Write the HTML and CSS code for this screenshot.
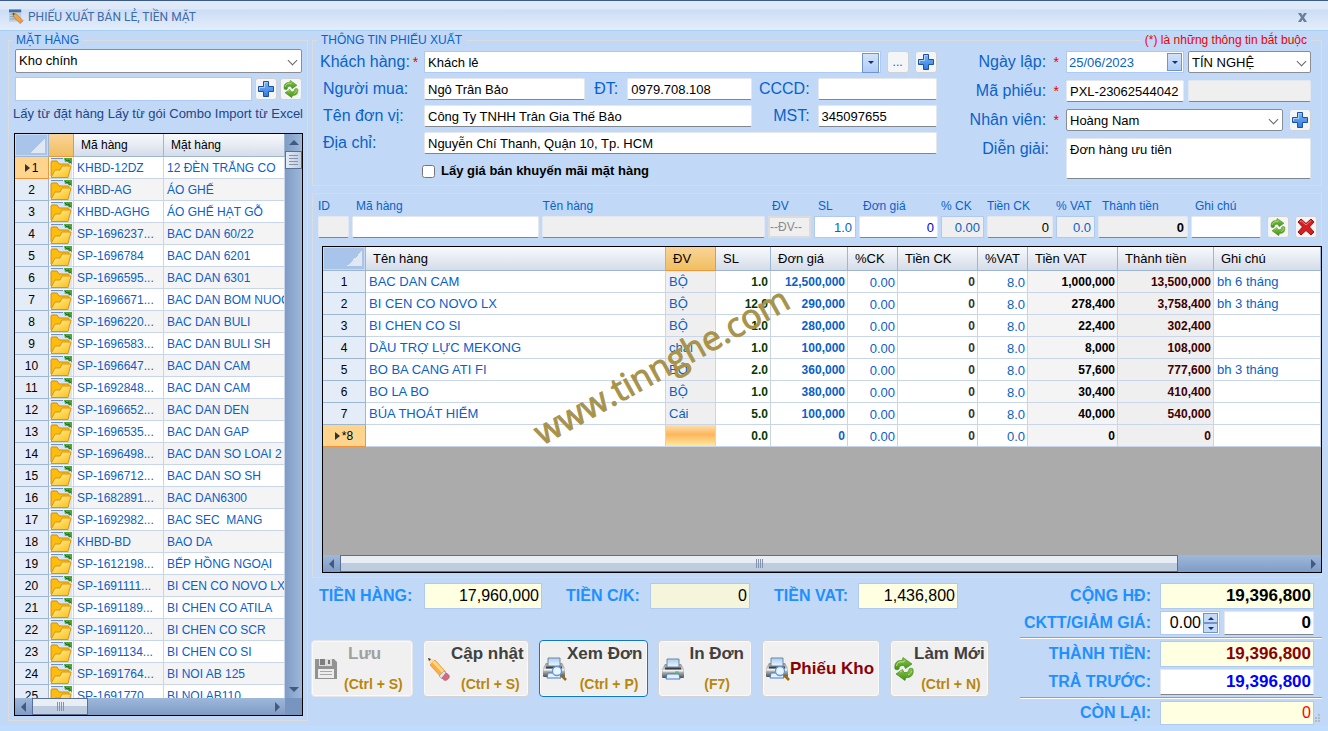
FILE: index.html
```html
<!DOCTYPE html>
<html lang="vi">
<head>
    <meta charset="UTF-8">
    <title>Phiếu xuất bán lẻ, tiền mặt</title>
    <link rel="stylesheet" href="styles.css">
</head>
<body>

<!-- icons shared by the buttons and the tables -->
<svg class="icon-defs" width="0" height="0" aria-hidden="true">
    <defs>
        <linearGradient id="gBlue" x1="0" y1="0" x2="0" y2="1">
            <stop offset="0" stop-color="#7db8f5"/>
            <stop offset="1" stop-color="#2f7ae0"/>
        </linearGradient>
        <linearGradient id="gGreen" x1="0" y1="0" x2="0" y2="1">
            <stop offset="0" stop-color="#8cc94a"/>
            <stop offset="1" stop-color="#3f9216"/>
        </linearGradient>
        <linearGradient id="gFolder" x1="0" y1="0" x2="1" y2="1">
            <stop offset="0" stop-color="#fff3a0"/>
            <stop offset="1" stop-color="#f9bd16"/>
        </linearGradient>
        <linearGradient id="gGrey" x1="0" y1="0" x2="0" y2="1">
            <stop offset="0" stop-color="#8f9297"/>
            <stop offset=".45" stop-color="#d2d4d7"/>
            <stop offset="1" stop-color="#4c4f54"/>
        </linearGradient>
        <linearGradient id="gPaper" x1="0" y1="0" x2="0" y2="1">
            <stop offset="0" stop-color="#a9cdee"/>
            <stop offset="1" stop-color="#eef6ff"/>
        </linearGradient>
    </defs>
    <symbol id="plus" viewBox="0 0 18 18">
        <path d="M6.500 1.500h5v5h5v5h-5v5h-5v-5h-5v-5h5z" fill="url(#gBlue)" stroke="#1d4fa8" stroke-linejoin="round"/>
        <path d="M7.500 7.500v-5h3M2.500 10V7.500h5" fill="none" stroke="#a9d2fb"/>
    </symbol>
    <symbol id="refresh" viewBox="0 0 20 24">
        <path d="M1 12C0 6 3 3 8 3.500L9 .5l9 6.500-6.500 4.500L10 8.500C7 8 5 9 5 12c-1 1-3 1-4 0z" fill="url(#gGreen)" stroke="#3a7d14" stroke-width=".6"/>
        <path d="M19 12c1 6-2 9-7 8.500l-1 3L2 17l6.500-4.500 1.500 3c3 .5 5-.5 5-3.500 1-1 3-1 4 0z" fill="url(#gGreen)" stroke="#3a7d14" stroke-width=".6"/>
        <path d="M2.500 9C3.500 5 6 4.500 9.500 5l1-1.500" fill="none" stroke="#c4e893"/>
        <path d="M6 15l2-1M14 18c2-1 3-2 3.500-4" fill="none" stroke="#b6e07a"/>
    </symbol>
    <symbol id="cross" viewBox="0 0 18 18">
        <path d="M4 1l5 4.500L14 1l3 3-4.500 5L17 14l-3 3-5-4.500L4 17l-3-3 4.500-5L1 4z" fill="#d42020" stroke="#98100f" stroke-linejoin="round"/>
        <path d="M3 4l1-1.500L9 7l5-4.500" fill="none" stroke="#f0807a"/>
    </symbol>
    <symbol id="folder" viewBox="0 0 22 20">
        <path d="M1 0h19l2 2v18H1z" fill="#d5e6f8"/>
        <path d="M14 0h8v7c-1-3-4-4-7-3z" fill="#4fa63c"/>
        <path d="M15 1l2 2 2-1v3l2-1" fill="none" stroke="#1f6e1b"/>
        <path d="M1 18V4q0-1 1-1h5l2 3h9q1 0 1 1v2" fill="#fdbd0c" stroke="#d88d08"/>
        <path d="M1 19.500L5 12h5l2-4h9l-3 11.500z" fill="url(#gFolder)" stroke="#dc9310" stroke-linejoin="round"/>
        <path d="M1 .5h12" stroke="#6c93c4"/>
    </symbol>
    <symbol id="floppy" viewBox="0 0 22 22">
        <path d="M0 1h19l3 3v17H0z" fill="#929292"/>
        <path d="M4 1h13v7H4z" fill="#dcdcdc"/>
        <path d="M5 1h5v6H5z" fill="#7e7e7e"/>
        <path d="M13 2h2v4h-2z" fill="#777"/>
        <path d="M3 11h16v9H3z" fill="#ededed"/>
        <path d="M5 13.500h12M5 16.500h12" stroke="#a6a6a6"/>
    </symbol>
    <symbol id="pencil" viewBox="0 0 24 24">
        <path d="M1 1l7 2-5 5z" fill="#f7dcae"/>
        <path d="M1 1l3 1-2 2z" fill="#333"/>
        <path d="M8 3l11 12-5 5L3 8z" fill="#fcae3d" stroke="#e0882a" stroke-width=".6"/>
        <path d="M8 4l10 11-2 2L5 5z" fill="#ffd68b"/>
        <path d="M17 14l3 3-5 5-3-3z" fill="#dfe3e8" stroke="#8f8f8f" stroke-width=".6"/>
        <path d="M19 16c4 2 4 4 2 6s-4 2-6-1z" fill="#d9697c" stroke="#b04a5d" stroke-width=".6"/>
    </symbol>
    <symbol id="printer" viewBox="0 0 22 22">
        <path d="M3 6h16l3 5v8q0 1-1 1H1q-1 0-1-1v-8z" fill="url(#gGrey)"/>
        <path d="M5 1h12v8H5z" fill="url(#gPaper)" stroke="#6f87a3"/>
        <path d="M3 9.500h16v2H3z" fill="#3b3e43"/>
        <path d="M1 12h20v1.500H1z" fill="#f0f1f3"/>
        <path d="M13 14h4" stroke="#3fbf2c"/>
        <path d="M5 16h12l1 5H4z" fill="#e4f0fd" stroke="#4b7fc0"/>
    </symbol>
    <symbol id="printerSearch" viewBox="0 0 24 24">
        <path d="M3 6h16l3 5v8q0 1-1 1H1q-1 0-1-1v-8z" fill="url(#gGrey)"/>
        <path d="M5 1h12v8H5z" fill="url(#gPaper)" stroke="#6f87a3"/>
        <path d="M3 9.500h16v2H3z" fill="#3b3e43"/>
        <path d="M1 12h20v1.500H1z" fill="#f0f1f3"/>
        <path d="M5 16h12l1 5H4z" fill="#e4f0fd" stroke="#4b7fc0"/>
        <path d="M18 18l5 5" stroke="#9a6a1c" stroke-width="2.500"/>
        <circle cx="14" cy="14" r="4.500" fill="#e9f6ff" stroke="#5f9ad6" stroke-width="1.300"/>
    </symbol>
    <symbol id="formEdit" viewBox="0 0 16 16">
        <path d="M0 0h13v13H0z" fill="#c3cedb"/>
        <path d="M0 0h13v3H0z" fill="#3f6d9f"/>
        <path d="M1 5h6M1 7.500h4M1 10h7" stroke="#8aa4c2"/>
        <path d="M4 4l4 1 7 7-3 3-7-7z" fill="#f2a63d" stroke="#a8692a" stroke-width=".7"/>
        <path d="M4 4l2 .5L5 6z" fill="#222"/>
        <path d="M13 10l2 2-3 3-2-2z" fill="#e8926b"/>
    </symbol>
</svg>

<div class="window">
    <header class="titlebar">
        <svg class="title-icon"><use href="#formEdit"/></svg>
        <h1>PHIẾU XUẤT BÁN LẺ, TIỀN MẶT</h1>
        <button class="close" aria-label="Đóng"><svg width="11" height="9" viewBox="0 0 11 9"><path d="M1 0h3l1.500 2.500L7 0h3L7 4.500 10 9H7L5.500 6.500 4 9H1l3-4.500z" fill="#6b7d99"/></svg></button>
    </header>

    <div class="content">
        <!-- product list -->
        <fieldset class="group products">
            <legend>MẶT HÀNG</legend>
            <div class="combo combo-tall">
                <select aria-label="Kho"><option>Kho chính</option></select>
            </div>
            <div class="search">
                <input class="field flat" type="text" aria-label="Tìm mặt hàng">
                <button class="icon-btn" aria-label="Thêm mặt hàng"><svg width="18" height="18"><use href="#plus"/></svg></button>
                <button class="icon-btn" aria-label="Làm mới danh sách"><svg width="16" height="18"><use href="#refresh"/></svg></button>
            </div>
            <nav class="links">
                <a href="#">Lấy từ đặt hàng</a>
                <a href="#">Lấy từ gói Combo</a>
                <a href="#">Import từ Excel</a>
            </nav>
            <div class="grid">
                <div class="grid-view">
                    <div class="grid-clip">
                        <table class="product-table">
                            <colgroup><col class="w34"><col class="w25"><col class="w90"><col></colgroup>
                            <thead>
                                <tr><th class="corner"></th><th class="hot"></th><th>Mã hàng</th><th>Mặt hàng</th></tr>
                            </thead>
                            <tbody>
                                <tr class="current"><th><span class="caret"></span>1</th><td><svg><use href="#folder"/></svg></td><td>KHBD-12DZ</td><td>12 ĐÈN TRẮNG CO</td></tr>
                                <tr><th>2</th><td><svg><use href="#folder"/></svg></td><td>KHBD-AG</td><td>ÁO GHẾ</td></tr>
                                <tr><th>3</th><td><svg><use href="#folder"/></svg></td><td>KHBD-AGHG</td><td>ÁO GHẾ HẠT GỖ</td></tr>
                                <tr><th>4</th><td><svg><use href="#folder"/></svg></td><td>SP-1696237...</td><td>BAC DAN 60/22</td></tr>
                                <tr><th>5</th><td><svg><use href="#folder"/></svg></td><td>SP-1696784</td><td>BAC DAN 6201</td></tr>
                                <tr><th>6</th><td><svg><use href="#folder"/></svg></td><td>SP-1696595...</td><td>BAC DAN 6301</td></tr>
                                <tr><th>7</th><td><svg><use href="#folder"/></svg></td><td>SP-1696671...</td><td>BAC DAN BOM NUOC</td></tr>
                                <tr><th>8</th><td><svg><use href="#folder"/></svg></td><td>SP-1696220...</td><td>BAC DAN BULI</td></tr>
                                <tr><th>9</th><td><svg><use href="#folder"/></svg></td><td>SP-1696583...</td><td>BAC DAN BULI SH</td></tr>
                                <tr><th>10</th><td><svg><use href="#folder"/></svg></td><td>SP-1696647...</td><td>BAC DAN CAM</td></tr>
                                <tr><th>11</th><td><svg><use href="#folder"/></svg></td><td>SP-1692848...</td><td>BAC DAN CAM</td></tr>
                                <tr><th>12</th><td><svg><use href="#folder"/></svg></td><td>SP-1696652...</td><td>BAC DAN DEN</td></tr>
                                <tr><th>13</th><td><svg><use href="#folder"/></svg></td><td>SP-1696535...</td><td>BAC DAN GAP</td></tr>
                                <tr><th>14</th><td><svg><use href="#folder"/></svg></td><td>SP-1696498...</td><td>BAC DAN SO LOAI 2</td></tr>
                                <tr><th>15</th><td><svg><use href="#folder"/></svg></td><td>SP-1696712...</td><td>BAC DAN SO SH</td></tr>
                                <tr><th>16</th><td><svg><use href="#folder"/></svg></td><td>SP-1682891...</td><td>BAC DAN6300</td></tr>
                                <tr><th>17</th><td><svg><use href="#folder"/></svg></td><td>SP-1692982...</td><td>BAC SEC&nbsp; MANG</td></tr>
                                <tr><th>18</th><td><svg><use href="#folder"/></svg></td><td>KHBD-BD</td><td>BAO DA</td></tr>
                                <tr><th>19</th><td><svg><use href="#folder"/></svg></td><td>SP-1612198...</td><td>BẾP HỒNG NGOẠI</td></tr>
                                <tr><th>20</th><td><svg><use href="#folder"/></svg></td><td>SP-1691111...</td><td>BI CEN CO NOVO LX</td></tr>
                                <tr><th>21</th><td><svg><use href="#folder"/></svg></td><td>SP-1691189...</td><td>BI CHEN CO ATILA</td></tr>
                                <tr><th>22</th><td><svg><use href="#folder"/></svg></td><td>SP-1691120...</td><td>BI CHEN CO SCR</td></tr>
                                <tr><th>23</th><td><svg><use href="#folder"/></svg></td><td>SP-1691134...</td><td>BI CHEN CO SI</td></tr>
                                <tr><th>24</th><td><svg><use href="#folder"/></svg></td><td>SP-1691764...</td><td>BI NOI AB 125</td></tr>
                                <tr><th>25</th><td><svg><use href="#folder"/></svg></td><td>SP-1691770...</td><td>BI NOI AB110</td></tr>
                            </tbody>
                        </table>
                    </div>
                    <div class="scroll-v">
                        <span class="arrow up"></span>
                        <span class="thumb"></span>
                        <span class="arrow down"></span>
                    </div>
                </div>
                <div class="scroll-h">
                    <span class="arrow left"></span>
                    <span class="thumb thumb-short"></span>
                    <span class="arrow right"></span>
                    <span class="scroll-corner"></span>
                </div>
            </div>
        </fieldset>

        <main class="invoice">
            <!-- customer and voucher info -->
            <fieldset class="group info">
                <legend>THÔNG TIN PHIẾU XUẤT</legend>
                <span class="note">(*) là những thông tin bắt buộc</span>
                <div class="customer">
                    <div class="row">
                        <label class="first" for="khach">Khách hàng:<b>*</b></label>
                        <div class="combo combo-blue"><select id="khach"><option>Khách lẻ</option></select></div>
                        <button class="icon-btn dots">...</button>
                        <button class="icon-btn" aria-label="Thêm khách hàng"><svg width="18" height="18"><use href="#plus"/></svg></button>
                    </div>
                    <div class="row">
                        <label class="first sub" for="nguoimua">Người mua:</label>
                        <input class="field buyer" id="nguoimua" type="text" value="Ngô Trân Bảo">
                        <label class="phone-label" for="dt">ĐT:</label>
                        <input class="field phone" id="dt" type="text" value="0979.708.108">
                        <label class="tax-label" for="cccd">CCCD:</label>
                        <input class="field tax" id="cccd" type="text">
                    </div>
                    <div class="row">
                        <label class="first sub" for="donvi">Tên đơn vị:</label>
                        <input class="field grow" id="donvi" type="text" value="Công Ty TNHH Trân Gia Thế Bảo">
                        <label class="tax-label" for="mst">MST:</label>
                        <input class="field tax" id="mst" type="text" value="345097655">
                    </div>
                    <div class="row">
                        <label class="first sub" for="diachi">Địa chỉ:</label>
                        <input class="field grow" id="diachi" type="text" value="Nguyễn Chí Thanh, Quận 10, Tp. HCM">
                    </div>
                    <label class="promo"><input type="checkbox"> Lấy giá bán khuyến mãi mặt hàng</label>
                </div>
                <div class="voucher">
                    <label for="ngay">Ngày lập: <b>*</b></label>
                    <div class="pair">
                        <div class="date"><input id="ngay" type="text" value="25/06/2023"><button class="drop" aria-label="Chọn ngày"></button></div>
                        <div class="combo"><select aria-label="Chi nhánh"><option>TÍN NGHỆ</option></select></div>
                    </div>
                    <label for="maphieu">Mã phiếu: <b>*</b></label>
                    <div class="pair">
                        <input class="field" id="maphieu" type="text" value="PXL-23062544042">
                        <input class="field off" type="text" aria-label="Mã phụ" readonly>
                    </div>
                    <label for="nhanvien">Nhân viên: <b>*</b></label>
                    <div class="staff">
                        <div class="combo"><select id="nhanvien"><option>Hoàng Nam</option></select></div>
                        <button class="icon-btn" aria-label="Thêm nhân viên"><svg width="18" height="18"><use href="#plus"/></svg></button>
                    </div>
                    <label class="memo-label" for="diengiai">Diễn giải:</label>
                    <textarea class="field memo" id="diengiai">Đơn hàng ưu tiên</textarea>
                </div>
            </fieldset>

            <!-- voucher lines -->
            <section class="group lines">
                <div class="entry">
                    <label>ID<input class="field off" type="text" readonly></label>
                    <label class="in">Mã hàng<input class="field" type="text"></label>
                    <label>Tên hàng<input class="field off" type="text" readonly></label>
                    <label class="in">ĐV<select class="unit" disabled><option>--ĐV--</option></select></label>
                    <label class="in">SL<input class="field flat num" type="text" value="1.0"></label>
                    <label class="in">Đơn giá<input class="field num price" type="text" value="0"></label>
                    <label>% CK<input class="field flat off num" type="text" value="0.00"></label>
                    <label>Tiền CK<input class="field off num black" type="text" value="0"></label>
                    <label>% VAT<input class="field flat off num" type="text" value="0.0"></label>
                    <label class="in">Thành tiền<input class="field off num strong" type="text" value="0"></label>
                    <label class="in">Ghi chú<input class="field" type="text"></label>
                    <button class="icon-btn" aria-label="Làm mới dòng"><svg width="16" height="18"><use href="#refresh"/></svg></button>
                    <button class="icon-btn" aria-label="Xóa dòng"><svg width="18" height="18"><use href="#cross"/></svg></button>
                </div>
                <div class="grid line-grid">
                    <div class="grid-view">
                        <div class="grid-clip">
                            <table class="line-table">
                                <colgroup>
                                    <col class="w43"><col><col class="w50"><col class="w55"><col class="w77"><col class="w50">
                                    <col class="w80"><col class="w50"><col class="w90"><col class="w96"><col class="w107">
                                </colgroup>
                                <thead>
                                    <tr><th class="corner"></th><th>Tên hàng</th><th class="hot">ĐV</th><th>SL</th><th>Đơn giá</th><th>%CK</th><th>Tiền CK</th><th>%VAT</th><th>Tiền VAT</th><th>Thành tiền</th><th>Ghi chú</th></tr>
                                </thead>
                                <tbody>
                                    <tr><th>1</th><td>BAC DAN CAM</td><td>BỘ</td><td>1.0</td><td>12,500,000</td><td>0.00</td><td>0</td><td>8.0</td><td>1,000,000</td><td>13,500,000</td><td>bh 6 tháng</td></tr>
                                    <tr><th>2</th><td>BI CEN CO NOVO LX</td><td>BỘ</td><td>12.0</td><td>290,000</td><td>0.00</td><td>0</td><td>8.0</td><td>278,400</td><td>3,758,400</td><td>bh 3 tháng</td></tr>
                                    <tr><th>3</th><td>BI CHEN CO SI</td><td>BỘ</td><td>1.0</td><td>280,000</td><td>0.00</td><td>0</td><td>8.0</td><td>22,400</td><td>302,400</td><td></td></tr>
                                    <tr><th>4</th><td>DẦU TRỢ LỰC MEKONG</td><td>chai</td><td>1.0</td><td>100,000</td><td>0.00</td><td>0</td><td>8.0</td><td>8,000</td><td>108,000</td><td></td></tr>
                                    <tr><th>5</th><td>BO BA CANG ATI FI</td><td>BỘ</td><td>2.0</td><td>360,000</td><td>0.00</td><td>0</td><td>8.0</td><td>57,600</td><td>777,600</td><td>bh 3 tháng</td></tr>
                                    <tr><th>6</th><td>BO LA BO</td><td>BỘ</td><td>1.0</td><td>380,000</td><td>0.00</td><td>0</td><td>8.0</td><td>30,400</td><td>410,400</td><td></td></tr>
                                    <tr><th>7</th><td>BÚA THOÁT HIỂM</td><td>Cái</td><td>5.0</td><td>100,000</td><td>0.00</td><td>0</td><td>8.0</td><td>40,000</td><td>540,000</td><td></td></tr>
                                    <tr class="current"><th><span class="caret"></span>*8</th><td></td><td></td><td>0.0</td><td>0</td><td>0.00</td><td>0</td><td>0.0</td><td>0</td><td>0</td><td></td></tr>
                                </tbody>
                            </table>
                        </div>
                    </div>
                    <div class="scroll-h">
                        <span class="arrow left"></span>
                        <span class="thumb thumb-long"></span>
                        <span class="arrow right"></span>
                    </div>
                    <div class="watermark">www.tinnghe.com</div>
                </div>
            </section>

            <!-- totals and actions -->
            <footer class="bottom">
                <div class="bottom-left">
                    <div class="totals">
                        <label for="tienhang">TIỀN HÀNG:</label>
                        <input class="money goods" id="tienhang" type="text" value="17,960,000">
                        <label for="tienck">TIỀN C/K:</label>
                        <input class="money beige" id="tienck" type="text" value="0">
                        <label for="tienvat">TIỀN VAT:</label>
                        <input class="money" id="tienvat" type="text" value="1,436,800">
                    </div>
                    <div class="actions">
                        <button class="act w-save" disabled><svg width="22" height="22"><use href="#floppy"/></svg><span>Lưu<kbd>(Ctrl + S)</kbd></span></button>
                        <button class="act w-update"><svg width="24" height="24"><use href="#pencil"/></svg><span>Cập nhật<kbd>(Ctrl + S)</kbd></span></button>
                        <button class="act w-view focus"><svg width="24" height="24"><use href="#printerSearch"/></svg><span>Xem Đơn<kbd>(Ctrl + P)</kbd></span></button>
                        <button class="act w-print"><svg width="22" height="22"><use href="#printer"/></svg><span>In Đơn<kbd>(F7)</kbd></span></button>
                        <button class="act w-store"><svg width="24" height="24"><use href="#printerSearch"/></svg><span>Phiếu Kho</span></button>
                        <button class="act w-new"><svg width="20" height="24"><use href="#refresh"/></svg><span>Làm Mới<kbd>(Ctrl + N)</kbd></span></button>
                    </div>
                </div>
                <div class="summary">
                    <div class="sum-row tall">
                        <label for="conghd">CỘNG HĐ:</label>
                        <input class="money bold" id="conghd" type="text" value="19,396,800">
                    </div>
                    <div class="sum-row">
                        <label for="cktt">CKTT/GIẢM GIÁ:</label>
                        <div class="spin">
                            <input id="cktt" type="text" value="0.00">
                            <span><button aria-label="Tăng"><i class="up"></i></button><button aria-label="Giảm"><i class="down"></i></button></span>
                        </div>
                        <input class="money bold white" type="text" aria-label="Giảm giá" value="0">
                    </div>
                    <hr>
                    <div class="sum-row tall">
                        <label for="thanhtien">THÀNH TIỀN:</label>
                        <input class="money bold maroon" id="thanhtien" type="text" value="19,396,800">
                    </div>
                    <div class="sum-row tall">
                        <label for="tratruoc">TRẢ TRƯỚC:</label>
                        <input class="money bold white blue" id="tratruoc" type="text" value="19,396,800">
                    </div>
                    <hr>
                    <div class="sum-row">
                        <label for="conlai">CÒN LẠI:</label>
                        <input class="money red" id="conlai" type="text" value="0">
                    </div>
                </div>
            </footer>
        </main>
    </div>
    <svg class="grip" width="8" height="9" viewBox="0 0 8 9"><path d="M4 0h2v2H4zM4 3h2v2H4zM1 3h2v2H1zM4 6h2v2H4zM1 6h2v2H1z" fill="#b3b9c4"/></svg>
</div>

</body>
</html>
```

FILE: styles.css
```css
* {
    box-sizing: border-box;
}

body {
    margin: 0;
    font-family: "Liberation Sans", Arial, sans-serif;
    font-size: 13px;
    color: #000;
    background: #bfdbff;
}

input, select, textarea, button {
    margin: 0;
    padding: 0;
    border: 0;
    border-radius: 0;
    font-family: inherit;
    font-size: 13px;
    color: #000;
    min-width: 0;
}

svg {
    display: block;
    flex: none;
}

.icon-defs {
    position: absolute;
}

.window {
    position: relative;
    display: flex;
    flex-direction: column;
    height: 100vh;
    min-height: 600px;
    overflow: hidden;
    border-bottom: 6px solid #bfdbff;
    background: #c2d8f7;
}

/* title bar */
.titlebar {
    display: flex;
    align-items: center;
    flex: none;
    height: 31px;
    padding: 3px 20px 0 9px;
    border-top: 1px solid #3b5a8c;
    border-bottom: 1px solid #a8d0f5;
    background: linear-gradient(#e3ebf9 0, #dde8f8 8px, #cbddf5 9px, #e4eefb 100%);
}

.title-icon {
    width: 15px;
    height: 16px;
}

.titlebar h1 {
    flex: 1;
    margin: 0 0 0 4px;
    font: 12px Roboto, sans-serif;
    color: #3e6aaa;
}

.close {
    background: none;
}

.content {
    display: flex;
    flex: 1;
    gap: 4px;
    min-height: 0;
    padding: 2px 6px 0 8px;
}

/* group boxes */
.group {
    min-width: 0;
    margin: 0;
    border: 1px solid #dcdcdc;
}

.group legend {
    margin-left: -3px;
    padding: 0 4px;
    font-size: 12px;
    line-height: 14px;
    color: #0a62c9;
}

.field {
    height: 22px;
    padding: 0 3px;
    border: 1px solid #e4e8ee;
    border-bottom-color: #80868e;
    border-radius: 2px;
    background: #fff;
}

.field.flat {
    border-color: #aecaf0;
    border-radius: 0;
}

.field.off {
    background: #efefef;
}

.grow {
    flex: 1;
}

.icon-btn {
    display: flex;
    align-items: center;
    justify-content: center;
    flex: none;
    width: 22px;
    height: 22px;
    border: 1px solid #cfd1d5;
    border-radius: 3px;
    background: #f4f5f7;
}

.dots {
    color: #0a62c9;
    font-size: 12px;
}

/* drop-down lists */
.combo {
    position: relative;
    flex: 1;
    min-width: 0;
}

.combo select {
    display: block;
    width: 100%;
    height: 22px;
    padding: 0 20px 0 3px;
    border: 1px solid #8a8e94;
    border-radius: 2px;
    background: #fff;
    appearance: none;
}

.combo-tall {
    flex: none;
}

.combo-tall select {
    height: 24px;
    padding-bottom: 2px;
}

.combo::after {
    content: "";
    position: absolute;
    right: 6px;
    top: 50%;
    width: 6px;
    height: 6px;
    margin-top: -4px;
    border-right: 1px solid #666;
    border-bottom: 1px solid #666;
    transform: rotate(45deg);
    pointer-events: none;
}

.combo-blue select {
    border-color: #aecaf0;
    border-radius: 0;
}

.combo-blue::before {
    content: "";
    position: absolute;
    right: 2px;
    top: 2px;
    width: 15px;
    height: 18px;
    border: 1px solid #7494c8;
    background: linear-gradient(#d3e3f8, #aecdf8);
    pointer-events: none;
}

.combo-blue::after {
    right: 7px;
    width: 0;
    height: 0;
    margin-top: -1px;
    border: 3px solid transparent;
    border-top-color: #15306e;
    border-bottom: 0;
    transform: none;
}

/* product list */
.products {
    display: flex;
    flex-direction: column;
    flex: none;
    width: 300px;
    margin-bottom: 4px;
    padding: 2px 5px 4px 6px;
}

.search {
    display: flex;
    align-items: center;
    gap: 3px;
    margin-top: 4px;
}

.search .field {
    flex: 1;
    height: 24px;
}

.links {
    display: flex;
    justify-content: space-between;
    height: 16px;
    margin: 5px -1px 11px -2px;
    line-height: 16px;
    white-space: nowrap;
}

.links a {
    color: #1d4587;
    text-decoration: none;
}

/* data grids */
.grid {
    position: relative;
    display: flex;
    flex-direction: column;
    flex: 1;
    min-height: 0;
    margin-left: -1px;
    margin-right: -1px;
    border: 1px solid #000;
}

.grid-view {
    display: flex;
    flex: 1;
    min-height: 0;
}

.grid-clip {
    flex: 1;
    min-width: 0;
    overflow: hidden;
    background: #ababab;
}

table {
    width: 100%;
    table-layout: fixed;
    border-collapse: separate;
    border-spacing: 0;
}

.w25 { width: 25px; }
.w34 { width: 34px; }
.w43 { width: 43px; }
.w50 { width: 50px; }
.w55 { width: 55px; }
.w77 { width: 77px; }
.w80 { width: 80px; }
.w90 { width: 90px; }
.w96 { width: 96px; }
.w107 { width: 107px; }

th, td {
    height: 22px;
    padding: 0 3px;
    border-right: 1px solid #c9d5e8;
    border-bottom: 1px solid #c9d5e8;
    line-height: 16px;
    text-align: left;
    white-space: nowrap;
    overflow: hidden;
}

td {
    color: #0a5fc8;
    background: #fff;
}

th {
    font-weight: normal;
}

thead th {
    height: 23px;
    padding: 0 7px;
    border-color: #9db6d2;
    background: linear-gradient(#f8fafc, #d5dce9);
}

thead .corner {
    background: linear-gradient(135deg, transparent 50%, #e2e8f2 50%) no-repeat right 3px center / 15px 15px, #a9c4eb;
    box-shadow: inset 0 0 0 1px #c8daf2;
}

thead .hot {
    border-color: #f0933a;
    background: linear-gradient(#f9d499, #f1bf60);
}

tbody th {
    padding: 0;
    border-color: #9db6d2;
    text-align: center;
    background: #e4ecf7;
}

.current th {
    border-color: #f0933a;
    background: #ffd58d;
}

.caret {
    display: inline-block;
    margin-right: 2px;
    border: 4px solid transparent;
    border-left: 5px solid #333;
    border-right: 0;
}

.product-table {
    font-size: 12px;
}

.product-table tbody tr:nth-child(even) td {
    background: #f4f4f4;
}

.product-table td:nth-child(2) {
    padding: 0 1px;
}

.product-table td svg {
    width: 22px;
    height: 20px;
}

.line-table tbody {
    font-size: 13px;
}

.line-table tbody th {
    font-size: 12px;
}

.line-table thead th {
    height: 24px;
}

.line-table td:nth-child(n+4):nth-child(-n+10) {
    padding-right: 2px;
    font-size: 12px;
    font-weight: bold;
    text-align: right;
}

.line-table td:nth-child(3) {
    background: #efefef;
}

.line-table td:nth-child(4) {
    color: #003c00;
}

.line-table .current td:nth-child(3) {
    background: linear-gradient(#fde0b0 0, #fcb65c 45%, #ffe9a0 100%);
}

/* percent columns are not bold */
.line-table td:nth-child(6):nth-child(n+4),
.line-table td:nth-child(8):nth-child(n+4) {
    padding-top: 3px;
    font-size: 13px;
    font-weight: normal;
}

.line-table td:nth-child(7) {
    color: #333;
}

.line-table td:nth-child(9) {
    color: #000;
    background: #f4f4f4;
}

.line-table td:nth-child(10) {
    color: #400000;
    background: #efefef;
}

/* scroll bars */
.scroll-v {
    display: flex;
    flex-direction: column;
    align-items: center;
    flex: none;
    width: 17px;
    background: linear-gradient(90deg, #7f9cc5, #9db8da);
}

.scroll-h {
    display: flex;
    align-items: center;
    flex: none;
    height: 17px;
    background: linear-gradient(#9db8da, #7f9cc5);
}

.arrow {
    margin: 6px 4px;
    border: 5px solid transparent;
}

.arrow.up {
    border-top: 0;
    border-bottom-color: #44597f;
}

.arrow.down {
    margin-top: auto;
    border-bottom: 0;
    border-top-color: #44597f;
}

.arrow.left {
    margin: 0 6px;
    border-left: 0;
    border-right-color: #44597f;
}

.arrow.right {
    margin: 0 5px 0 auto;
    border-right: 0;
    border-left-color: #44597f;
}

.thumb {
    width: 17px;
    height: 18px;
    border: 1px solid #596f98;
    background: repeating-linear-gradient(#8493ad 0 1px, transparent 1px 3px) no-repeat center / 9px 10px, linear-gradient(90deg, #e6ebf3, #c0cde0);
}

.scroll-h .thumb {
    height: 17px;
    background: repeating-linear-gradient(90deg, #8493ad 0 1px, transparent 1px 2px) no-repeat center / 7px 9px, linear-gradient(#e9eef5 45%, #becce0 50%);
}

.scroll-h .thumb-short {
    width: 56px;
}

.scroll-h .thumb-long {
    flex: 0 0 auto;
    width: 84%;
}

.scroll-corner {
    align-self: stretch;
    width: 17px;
    background: #7895c0;
}

.invoice {
    display: flex;
    flex-direction: column;
    flex: 1;
    min-width: 0;
}

/* customer and voucher info */
.info {
    position: relative;
    display: flex;
    gap: 33px;
    flex: none;
    padding: 4px 10px 6px 7px;
}

.note {
    position: absolute;
    top: -14px;
    right: 10px;
    padding: 0 4px;
    line-height: 14px;
    font-size: 12px;
    color: #f00000;
    background: #c2d8f7;
}

.info label {
    font-size: 16px;
    line-height: 22px;
    color: #0a62c9;
    white-space: nowrap;
}

.info label b {
    margin-left: 3px;
    font-size: 14px;
    font-weight: normal;
    color: #f00000;
}

.customer {
    display: flex;
    flex-direction: column;
    flex: 1;
    gap: 5px;
    min-width: 0;
}

.row {
    display: flex;
}

.first {
    flex: none;
    width: 104px;
}

.first.sub {
    padding-left: 3px;
}

.row .icon-btn {
    margin-left: 6px;
}

.buyer {
    flex: 162;
}

.phone {
    flex: 123;
}

.phone-label {
    width: 42px;
    padding-left: 9px;
}

.tax-label {
    width: 66px;
    padding-right: 8px;
    text-align: right;
}

.tax {
    width: 119px;
}

.info label.promo {
    display: flex;
    align-items: center;
    gap: 6px;
    height: 16px;
    margin: 4px 0 0 102px;
    font-size: 13px;
    font-weight: bold;
    color: #000;
}

.promo input {
    width: 13px;
    height: 13px;
}

.voucher {
    display: grid;
    grid-template-columns: auto 245px;
    gap: 7px;
    flex: none;
    text-align: right;
}

.voucher .memo-label {
    padding-right: 10px;
}

.pair {
    display: grid;
    grid-template-columns: 118px 1fr;
    gap: 4px;
}

.pair .combo,
.staff .combo {
    text-align: left;
}

.date {
    display: flex;
    align-items: center;
    height: 22px;
    padding-right: 1px;
    border: 1px solid #aecaf0;
    background: #fff;
}

.date input {
    flex: 1;
    width: 0;
    padding-left: 2px;
    color: #0a62c9;
}

.drop {
    display: flex;
    align-items: center;
    justify-content: center;
    width: 15px;
    height: 18px;
    border: 1px solid #7494c8;
    background: linear-gradient(#d3e3f8, #aecdf8);
}

.drop::before {
    content: "";
    border: 3px solid transparent;
    border-top-color: #15306e;
    border-bottom: 0;
}

.staff {
    display: flex;
    gap: 6px;
}

.memo {
    height: 41px;
    padding: 3px;
    resize: none;
}

/* entry line above the grid */
.lines {
    display: flex;
    flex-direction: column;
    flex: 1;
    min-height: 0;
    margin-top: 7px;
    padding: 2px 0 4px 5px;
}

.entry {
    display: grid;
    grid-template-columns: 31px 187fr 222fr 43px 42px 79px 43px 66px 39px 90px 70px 25px 25px;
    gap: 3px;
    align-items: end;
    justify-items: end;
    padding-right: 4px;
}

.entry label {
    display: flex;
    flex-direction: column;
    width: 100%;
    min-width: 0;
    font-size: 12px;
    line-height: 20px;
    color: #0a62c9;
    white-space: nowrap;
}

.entry label.in {
    text-indent: 4px;
}

.entry .field,
.entry select {
    width: 100%;
    text-indent: 0;
}

.unit {
    height: 22px;
    border: 2px solid #dcdcdc;
    font-size: 12px;
    color: #8a8a8a;
    background: #efefef;
    appearance: none;
    opacity: 1;
}

.num {
    text-align: right;
    color: #0a62c9;
}

.num.price {
    color: #0000e0;
}

.num.black {
    color: #000;
}

.num.strong {
    font-weight: bold;
    color: #000;
}

.line-grid {
    margin: 8px -1px 0 4px;
}

.watermark {
    position: absolute;
    left: 195px;
    top: 95px;
    font: 34px "Open Sans", sans-serif;
    color: #a8934a;
    -webkit-text-stroke: 1px #a8934a;
    transform: rotate(-29deg);
    pointer-events: none;
}

/* totals and actions */
.bottom {
    display: flex;
    justify-content: space-between;
    flex: none;
    padding-top: 5px;
}

.totals {
    display: flex;
    align-items: center;
    padding-left: 7px;
}

.totals label,
.sum-row label {
    font-size: 16px;
    font-weight: bold;
    color: #1e90ff;
    white-space: nowrap;
}

.totals label {
    width: 105px;
}

.totals input + label {
    width: 108px;
    padding-left: 24px;
}

.money {
    width: 100px;
    height: 26px;
    padding: 0 2px;
    border: 1px solid #aecaf0;
    font-size: 16px;
    text-align: right;
    background: #ffffe1;
}

.money.goods {
    width: 118px;
}

.money.beige {
    background: #f5f5dc;
}

.money.white {
    border-color: #e4e8ee;
    border-bottom-color: #80868e;
    background: #fff;
}

.money.bold {
    font-size: 17px;
    font-weight: bold;
}

.money.maroon { color: #8b0000; }
.money.blue { color: #0000ff; }
.money.red { color: #ff0000; }

.actions {
    display: flex;
    gap: 10px;
    margin-top: 31px;
    margin-left: -1px;
}

.act {
    display: flex;
    align-items: center;
    height: 57px;
    padding: 0 7px 0 3px;
    border: 1px solid #d2d3d6;
    border-radius: 4px;
    font-size: 17px;
    font-weight: bold;
    color: #404040;
    background: #f0f0f0;
    box-shadow: inset 0 0 0 1px #fafafa;
}

.act span {
    flex: 1;
    line-height: 24px;
    text-align: right;
    white-space: nowrap;
}

.act kbd {
    display: block;
    margin-top: 6px;
    padding-right: 4px;
    font-family: inherit;
    font-size: 14px;
    color: #b8860b;
}

.act:disabled {
    border-color: #e4e6ea;
    color: #a0a0a0;
}

.act.focus {
    border-color: #0a78d4;
}

.w-save { width: 102px; }
.w-update { width: 106px; }
.w-view { width: 109px; }
.w-print { width: 94px; }
.w-store { width: 118px; }
.w-new { width: 99px; }

.w-save span {
    text-align: left;
    text-indent: 11px;
}

.w-save kbd {
    text-indent: 7px;
}

.w-print kbd {
    padding-right: 14px;
}

.w-store span {
    text-align: center;
    color: #8b0000;
}

.summary {
    width: 302px;
}

.sum-row {
    display: flex;
    align-items: center;
    gap: 4px;
    height: 24px;
    margin: 0 8px 2px 0;
}

.sum-row label {
    width: 136px;
    padding-right: 5px;
    text-align: right;
}

.sum-row .money {
    flex: 1;
    height: 100%;
}

.sum-row.tall {
    height: 26px;
}

.sum-row:last-child {
    margin-bottom: 0;
}

.summary hr {
    height: 2px;
    margin: 0 0 2px 0;
    border: 0;
    border-top: 1px solid #9a9da3;
    background: #fff;
}

.spin {
    display: flex;
    width: 60px;
    height: 100%;
    padding: 1px;
    border: 1px solid #aecaf0;
    background: #fff;
}

.spin input {
    flex: 1;
    width: 0;
    padding-right: 2px;
    font-size: 16px;
    text-align: right;
}

.spin span {
    display: flex;
    flex-direction: column;
    width: 15px;
}

.spin button {
    display: flex;
    align-items: center;
    justify-content: center;
    flex: 1;
    border: 1px solid #7494c8;
    background: #c3d9f8;
}

.spin i {
    border: 3px solid transparent;
}

.spin .up {
    border-top: 0;
    border-bottom-color: #15306e;
}

.spin .down {
    border-bottom: 0;
    border-top-color: #15306e;
}

.grip {
    position: absolute;
    right: 6px;
    bottom: 2px;
}
```
